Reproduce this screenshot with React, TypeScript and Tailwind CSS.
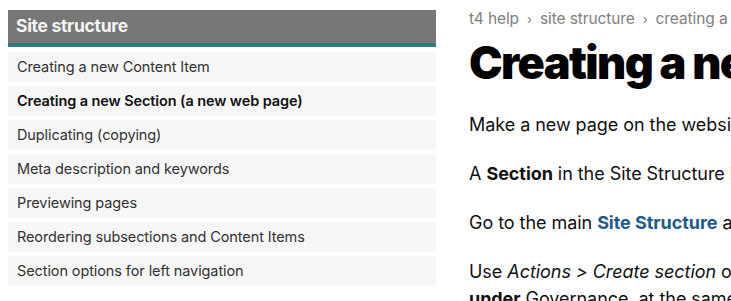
const navItems = [
  { label: "Creating a new Content Item" },
  { label: "Creating a new Section (a new web page)", active: true },
  { label: "Duplicating (copying)" },
  { label: "Meta description and keywords" },
  { label: "Previewing pages" },
  { label: "Reordering subsections and Content Items" },
  { label: "Section options for left navigation" },
];

export default function App() {
  return (
    <div
      className="w-[731px] h-[301px] overflow-hidden bg-white flex pt-[10px] pl-[8px]"
      style={{ fontFamily: "Inter, 'Noto Sans', sans-serif" }}
    >
      <aside className="w-[428px] shrink-0">
        <div className="bg-[#777777] h-[33px] flex items-center px-[8px]">
          <h2 className="text-[17.5px] font-bold text-[#f4f4f4] tracking-[-0.3px]">Site structure</h2>
        </div>
        <div className="h-[4px] bg-[#2f7c80]" />
        <ul className="mt-[5px] flex flex-col gap-[4px]">
          {navItems.map((item) => (
            <li
              key={item.label}
              className={
                item.active
                  ? "h-[30px] bg-[#f6f6f6] flex items-center pl-[9px] text-[14.5px] font-semibold text-[#111] tracking-[-0.1px]"
                  : "h-[30px] bg-[#f6f6f6] flex items-center pl-[9px] text-[14.5px] text-[#333] tracking-[-0.1px]"
              }
            >
              {item.label}
            </li>
          ))}
        </ul>
      </aside>

      <main className="ml-[33px] w-[720px] shrink-0">
        <nav className="flex items-center gap-[8px] text-[15.5px] leading-[18px] text-[#808080] whitespace-nowrap tracking-[-0.1px]">
          <span>t4 help</span>
          <span className="text-[13px]">›</span>
          <span>site structure</span>
          <span className="text-[13px]">›</span>
          <span>creating a new section (a new web page)</span>
        </nav>
        <h1 className="mt-[13px] text-[45px] leading-[44px] font-black text-black tracking-[-1.6px] whitespace-nowrap">
          Creating a new Section (a new web page)
        </h1>
        <div className="mt-[26px] text-[18px] leading-[27px] text-[#111] flex flex-col gap-[22px] tracking-[-0.05px]">
          <p>Make a new page on the website that can hold Content Items.</p>
          <p>
            A <strong className="font-bold">Section</strong> in the Site Structure holds content for a page.
          </p>
          <p>
            Go to the main <a className="font-bold text-[#1e5a8c]">Site Structure</a> and find where you want to add the page.
          </p>
          <p>
            Use <em>Actions &gt; Create section</em> on the parent section. New pages must go
            <br />
            <strong className="font-bold">under</strong> Governance, at the same level as other pages.
          </p>
        </div>
      </main>
    </div>
  );
}
